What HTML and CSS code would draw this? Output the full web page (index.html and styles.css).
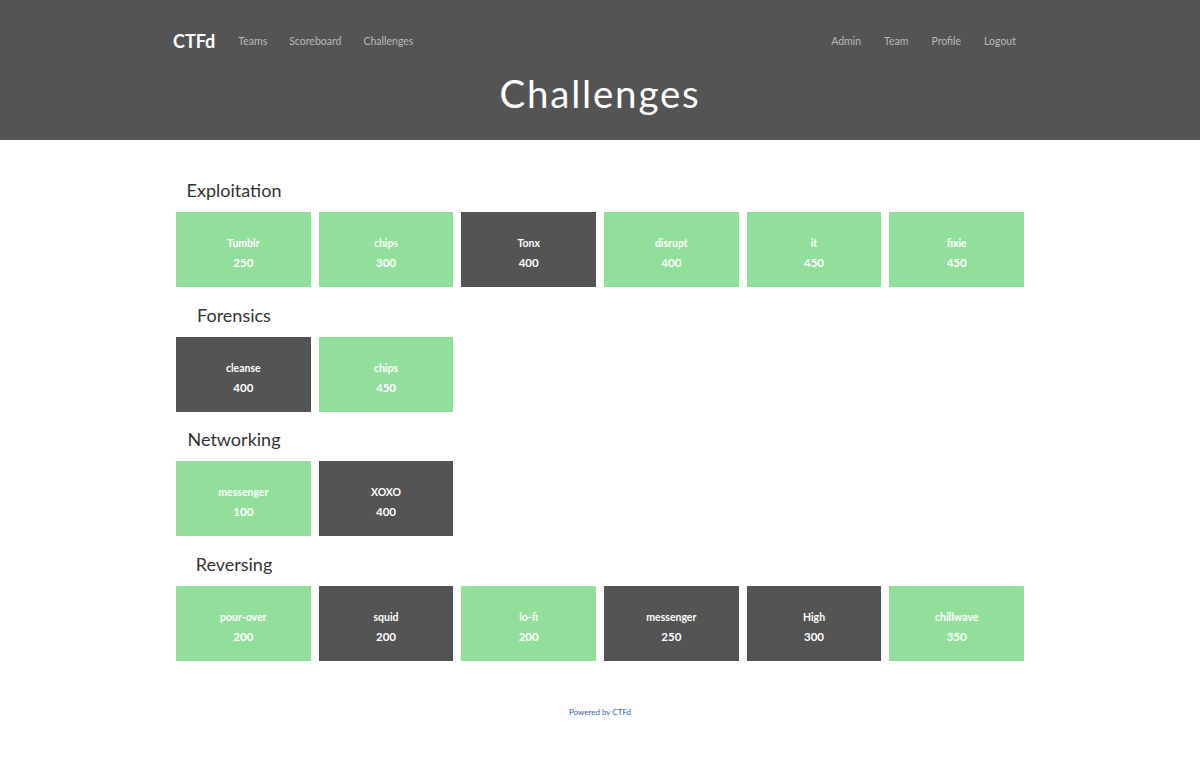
FILE: index.html
```html
<!DOCTYPE html>
<html lang="en">
<head>
  <meta charset="UTF-8" />
  <title>CTFd - Challenges</title>
  <link rel="stylesheet" href="styles.css">
</head>
<body>

  <div class="jumbotron">
    <nav class="navbar">
      <div class="nav-left">
        <a class="brand" href="#">CTFd</a>
        <a href="#">Teams</a>
        <a href="#">Scoreboard</a>
        <a href="#">Challenges</a>
      </div>
      <div class="nav-right">
        <a href="#">Admin</a>
        <a href="#">Team</a>
        <a href="#">Profile</a>
        <a href="#">Logout</a>
      </div>
    </nav>
    <h1>Challenges</h1>
  </div>

  <div class="container">

    <!-- Exploitation -->
    <div class="category"><h3>Exploitation</h3></div>
    <div class="board">
      <button class="chal">Tumblr<span>250</span></button>
      <button class="chal">chips<span>300</span></button>
      <button class="chal solved">Tonx<span>400</span></button>
      <button class="chal">disrupt<span>400</span></button>
      <button class="chal">it<span>450</span></button>
      <button class="chal">fixie<span>450</span></button>
    </div>

    <!-- Forensics -->
    <div class="category"><h3>Forensics</h3></div>
    <div class="board">
      <button class="chal solved">cleanse<span>400</span></button>
      <button class="chal">chips<span>450</span></button>
    </div>

    <!-- Networking -->
    <div class="category"><h3>Networking</h3></div>
    <div class="board">
      <button class="chal">messenger<span>100</span></button>
      <button class="chal solved">XOXO<span>400</span></button>
    </div>

    <!-- Reversing -->
    <div class="category"><h3>Reversing</h3></div>
    <div class="board">
      <button class="chal">pour-over<span>200</span></button>
      <button class="chal solved">squid<span>200</span></button>
      <button class="chal">lo-fi<span>200</span></button>
      <button class="chal solved">messenger<span>250</span></button>
      <button class="chal solved">High<span>300</span></button>
      <button class="chal">chillwave<span>350</span></button>
    </div>

  </div>

  <footer>
    <a href="#">Powered by CTFd</a>
  </footer>

</body>
</html>
```

FILE: styles.css
```css
body {
  margin: 0;
  font-family: Lato, "Noto Sans", sans-serif;
  color: #333;
  background: #fff;
}
a {
  text-decoration: none;
}
.jumbotron {
  background-color: #545454;
  height: 140px;
  box-sizing: border-box;
  padding-top: 26px;
}
.navbar {
  width: 848px;
  margin: 0 auto;
  display: flex;
  justify-content: space-between;
  align-items: center;
  height: 29px;
}
.nav-left, .nav-right {
  display: flex;
  align-items: center;
}
.navbar a {
  color: #b9b9b9;
  font-size: 10.5px;
  margin-left: 22px;
}
.nav-left a:first-child {
  margin-left: -3px;
}
.nav-right {
  margin-right: 8px;
}
.nav-right a {
  margin-left: 23px;
}
.nav-right a:first-child {
  margin-left: 0;
}
.navbar .brand {
  color: #fff;
  font-size: 18px;
  font-weight: 700;
  margin-right: 1px;
}
.jumbotron h1 {
  margin: 16px 0 0;
  text-align: center;
  color: #fff;
  font-family: Lato, sans-serif;
  font-weight: 400;
  font-size: 38.5px;
  letter-spacing: 1.8px;
  line-height: 44px;
}
.container {
  width: 848px;
  margin: 0 auto;
  padding-top: 37px;
}
.category {
  width: 116px;
  text-align: center;
}
.category h3 {
  margin: 0;
  font-size: 18px;
  font-weight: 400;
  line-height: 27px;
  color: #333;
}
.board {
  display: grid;
  grid-template-columns: repeat(6, 1fr);
  gap: 8px;
  margin: 8px 0 14.6px;
}
.chal {
  height: 75px;
  border: none;
  background-color: #92de9b;
  color: #fff;
  font-family: Lato, sans-serif;
  font-size: 10.5px;
  line-height: 14px;
  font-weight: 700;
  display: flex;
  flex-direction: column;
  align-items: center;
  justify-content: flex-start;
  gap: 6px;
  padding: 24px 0 0;
  cursor: pointer;
}
.chal span {
  font-size: 11.5px;
}
.chal.solved {
  background-color: #545454;
}
footer {
  text-align: center;
  padding-top: 24px;
}
footer a {
  font-size: 8px;
  color: #3a5fa8;
}
```
